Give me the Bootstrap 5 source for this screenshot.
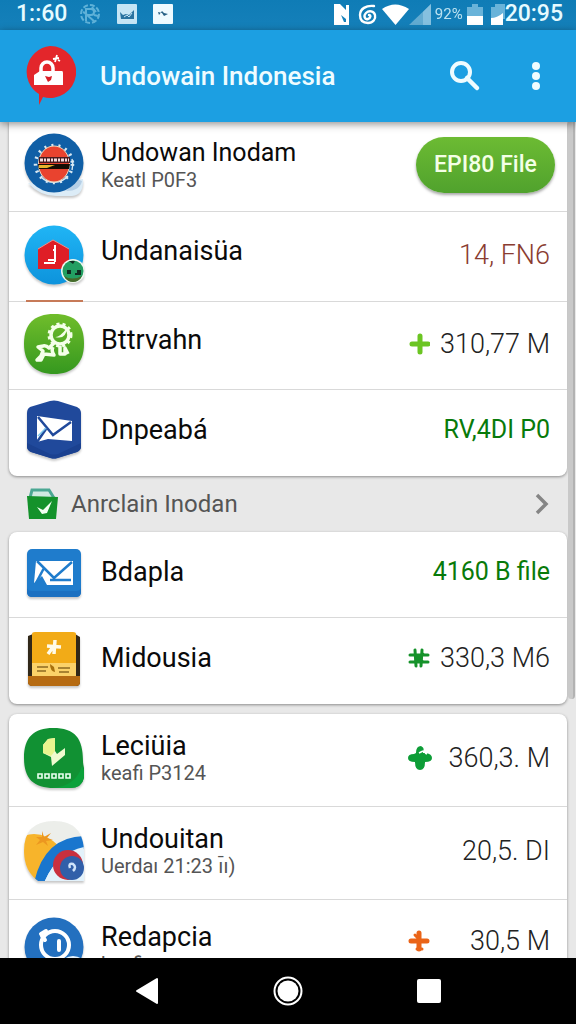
<!DOCTYPE html>
<html lang="id">
<head>
<meta charset="utf-8">
<meta name="viewport" content="width=device-width, initial-scale=1">
<title>Undowain Indonesia</title>
<link href="https://cdn.jsdelivr.net/npm/bootstrap@5.3.0/dist/css/bootstrap.min.css" rel="stylesheet">
<style>
  body { font-family: Roboto, "Liberation Sans", sans-serif; background: #e8e8e8; color: #0a0a0a; }
  .status-bar { background: linear-gradient(#0f7cb6, #1580ba); min-height: 30px; color: #e6fbff; font-size: 23px; font-weight: 500; line-height: 28px; padding: 0 13px 2px 16px; }
  .status-bar .percent { font-size: 15px; font-weight: 400; opacity: .8; }
  .app-bar { background: #1c9fe2; min-height: 92px; padding: 0 20px 0 24px; box-shadow: 0 2px 8px rgba(0,0,0,.45); z-index: 2; }
  .app-bar h1 { font-size: 26px; font-weight: 500; line-height: 32px; color: #effcff; }
  .app-bar .actions { gap: 43px; }
  .icon-btn { background: none; border: 0; padding: 0; line-height: 0; }
  .screen { padding: 0 9px; min-height: 0; }
  .panel { background: #fff; border-radius: 8px; box-shadow: 0 1px 3px rgba(0,0,0,.4); }
  .panel-first { border-radius: 0 0 8px 8px; }
  .panel-next { margin-top: 10px; }
  .entry { min-height: 90px; padding: 0 17px 4px 15px; gap: 17px; border-bottom: 1px solid #d9d9d9; }
  .entry:last-child { border-bottom: 0; }
  .entry-md { min-height: 88px; }
  .entry-sm { min-height: 86px; padding-bottom: 6px; }
  .entry-lg { min-height: 93px; }
  .entry-end { padding: 4px 17px 0 15px; }
  .entry-action { padding-right: 12px; }
  .entry svg.app { width: 60px; height: 64px; flex: none; filter: drop-shadow(0 2px 1px rgba(0,0,0,.22)); }
  .entry h2 { font-size: 27px; font-weight: 400; line-height: 30px; margin: 0; }
  .entry h2.raised { padding-bottom: 8px; }
  .entry-action h2 { font-size: 25px; }
  .entry p { font-size: 20px; line-height: 24px; margin: 0; color: #555; }
  .metric { min-width: 142px; }
  .amount { font-size: 27px; font-weight: 300; line-height: 30px; color: #222; }
  .amount-green { color: #087a0a; font-size: 25px; font-weight: 400; }
  .amount-red { color: #8a3c31; }
  .btn-file { background: linear-gradient(#6cbb33, #50a22d); color: #f4ffe6; font-size: 23px; font-weight: 500; line-height: 32px; padding: 12px 16px; border: 0; border-radius: 28px; min-width: 139px; box-shadow: 0 2px 3px rgba(0,0,0,.35); }
  .section-link { min-height: 56px; padding: 0 17px; gap: 12px; font-size: 24px; line-height: 30px; color: #555; text-decoration: none; }
  .strip { position: absolute; left: 17px; bottom: -1px; width: 57px; height: 2px; background: #c77a58; }
  .scroll-thumb { position: absolute; right: 1px; top: 0; width: 7px; height: 69%; background: #c9c9c9; border-right: 2px solid #b2b2b2; border-radius: 0 0 4px 4px; }
  .nav-keys { min-height: 66px; background: #000; padding: 0 134px; z-index: 2; }
</style>
</head>
<body class="vh-100 d-flex flex-column overflow-hidden">

<div class="status-bar d-flex align-items-center justify-content-between">
  <div class="d-flex align-items-center">
    <span class="me-2">1::60</span>
    <svg class="ms-1" width="22" height="22" viewBox="0 0 22 22" fill="none" stroke="#5eb1d8" stroke-width="2"><circle cx="11" cy="11" r="9" stroke-dasharray="5 2"/><path d="M7 18V6h5a3 3 0 0 1 0 6H8l8 7M4 9l4 2M13 4l4 5M15 12l4 1"/></svg>
    <svg class="ms-3" width="20" height="20" viewBox="0 0 20 20"><rect width="20" height="20" rx="1" fill="#c5e5f5"/><path d="M3 8l3 3 3-1 3 1 5-5v9H4z" fill="#2872a0"/><path d="M7 13l3-2 2 2 3-4" stroke="#c5e5f5" fill="none"/></svg>
    <svg class="ms-3" width="20" height="20" viewBox="0 0 20 20"><rect width="20" height="20" rx="1" fill="#eefaff"/><path d="M5 8l4 1 2 3 4-2-4-1-2-2-3 4z" fill="#255f85"/></svg>
  </div>
  <div class="d-flex align-items-center">
    <svg width="16" height="21" viewBox="0 0 16 21"><path d="M0 0h6l6 6V1h3v20H0z" fill="#fff"/><path d="M7 11l5 4v3h-2z" fill="#1580ba"/></svg>
    <svg class="ms-2" width="20" height="21" viewBox="0 0 20 21" fill="none" stroke="#fff" stroke-width="2.400" stroke-linecap="round"><path d="M16 2C8 1 2 5 2 11c0 5 3 8 8 8s8-4 7-8-6-5-9-2-1 7 2 6 3-4 1-4"/></svg>
    <svg class="ms-1" width="27" height="21" viewBox="0 0 27 21"><path d="M0 5Q13-4 27 5L13.500 21z" fill="#fff"/></svg>
    <svg width="22" height="21" viewBox="0 0 22 21"><path d="M0 21L22 0v21z" fill="#62abd1"/><path d="M14 8l8-8v21h-8z" fill="#85c0df"/></svg>
    <span class="percent ms-1">92%</span>
    <svg class="ms-1" width="16" height="21" viewBox="0 0 16 21"><path d="M0 3h5V0h6v3h5v9H0z" fill="#69b3d9"/><path d="M0 12h16v9H0z" fill="#fff"/></svg>
    <svg class="ms-2" width="14" height="21" viewBox="0 0 14 21"><path d="M0 3h4V0h10v15H0z" fill="#69b3d9"/><path d="M0 14q6 0 12-5v12H0z" fill="#fff"/></svg>
    <span>20:95</span>
  </div>
</div>

<header class="app-bar d-flex align-items-center position-relative">
  <svg width="52" height="60" viewBox="0 0 52 60"><path d="M26 0a26 26 0 1 1-7 51L15 59V48A26 26 0 0 1 26 0z" fill="#e3262b"/><path d="M10 29l6-4h22q1 0 1 2v12H10z" fill="#fff"/><path d="M17 26v-4a6 6 0 0 1 12 0v4" fill="none" stroke="#fff" stroke-width="3.500"/><path d="M21 30l4 1 3-1-1 4-3 2z" fill="#d81c24"/><path d="M33 9l-2 7M29 13l6-1M34 14l2 1" stroke="#fff" stroke-width="1.800"/></svg>
  <h1 class="mb-0 ms-4 flex-grow-1">Undowain Indonesia</h1>
  <div class="actions d-flex">
    <button class="icon-btn" aria-label="Cari"><svg width="32" height="32" viewBox="0 0 32 32" fill="none" stroke="#effcff"><circle cx="12" cy="12" r="9" stroke-width="4"/><path d="M18 18l10 10" stroke-width="4.500" stroke-linecap="round"/></svg></button>
    <button class="icon-btn" aria-label="Menu"><svg width="32" height="32" viewBox="0 0 32 32" fill="#effcff"><circle cx="12" cy="6" r="4"/><circle cx="12" cy="16" r="4"/><circle cx="12" cy="26" r="4"/></svg></button>
  </div>
</header>

<main class="screen flex-grow-1 overflow-hidden position-relative">
  <div class="panel panel-first">
    <div class="entry entry-action d-flex align-items-center">
      <svg class="app" viewBox="0 0 60 64"><path d="M4 50Q16 63 32 63H48Q60 62 59 46z" fill="#dcecf7"/><path d="M42 58Q56 58 58 48L53 46z" fill="#b5cfe6"/><circle cx="30" cy="30" r="29.500" fill="#105fa6"/><circle cx="30" cy="31" r="18.500" fill="none" stroke="#d8e9f3" stroke-width="3.500" stroke-dasharray="2 5"/><path d="M17 44a18.500 18.500 0 0 0 27-1M48 26a19 19 0 0 1 0 11" fill="none" stroke="#d8e9f3" stroke-width="1.500"/><ellipse cx="30" cy="31" rx="15.500" ry="18" fill="#e9432f" stroke="#eed7bb"/><path d="M15 24h31v6H15z" fill="#4a1c20"/><path d="M16 27h29" stroke="#f5dfe0" stroke-width="3" stroke-dasharray="3 1 2 1"/><path d="M14 31h32l-1 5H15z" fill="#160d04"/><path d="M15 32h16l-8 3h-8z" fill="#e7b32d"/></svg>
      <div class="flex-grow-1"><h2>Undowan Inodam</h2><p>Keatl P0F3</p></div>
      <button class="btn btn-file">EPI80 File</button>
    </div>
    <div class="entry d-flex align-items-center position-relative">
      <svg class="app" viewBox="0 0 60 64"><defs><linearGradient id="sky" x2="0" y2="1"><stop stop-color="#20b5f5"/><stop offset="1" stop-color="#0d93dc"/></linearGradient></defs><circle cx="30" cy="32" r="29.500" fill="url(#sky)"/><path d="M14 26l15-9 16 9v20H14z" fill="#df1e26"/><path d="M14 26l15-9 16 9" fill="none" stroke="#ef8d88"/><path d="M31 22v17M29 27h3M20 40h11M24 37h7" fill="none" stroke="#fff" stroke-width="2"/><circle cx="49" cy="48" r="12" fill="#eef7ef"/><circle cx="49" cy="48" r="10.500" fill="#239f62"/><path d="M40 53q8 5 18 0-3 6-9 6t-9-6z" fill="#456a2a"/><path d="M45 38l6 0-2 3zM43 47h4v4h-4zM53 47h4v5h-6v-2h2z" fill="#102d22"/></svg>
      <h2 class="raised flex-grow-1">Undanaisüa</h2>
      <span class="amount amount-red">14, FN6</span>
      <span class="strip"></span>
    </div>
    <div class="entry entry-md d-flex align-items-center">
      <svg class="app" viewBox="0 0 60 64"><defs><linearGradient id="leaf" x2="0" y2="1"><stop stop-color="#70bd2b"/><stop offset="1" stop-color="#35981f"/></linearGradient></defs><path d="M30 2C52 2 60 12 60 32S48 62 30 62 0 52 0 32 10 2 30 2z" fill="url(#leaf)"/><circle cx="36" cy="23" r="9" fill="none" stroke="#f4ffe9" stroke-width="3.500"/><circle cx="36" cy="23" r="11" fill="none" stroke="#f4ffe9" stroke-width="3" stroke-dasharray="3 3"/><path d="M31 25q4 1 12-9-1 12-12 9z" fill="#f4ffe9"/><path d="M30 31l-5 5q-3-3-6-2l-5 1 5 4-2 5-4 4 4 0 3-6 10 1q-3-4-1-8M36 34v8l5 0v-6l3 6" fill="none" stroke="#f4ffe9" stroke-width="3.500" stroke-linejoin="round"/></svg>
      <h2 class="raised flex-grow-1">Bttrvahn</h2>
      <div class="metric d-flex align-items-center justify-content-between">
        <svg width="22" height="22" viewBox="0 0 22 22"><path d="M12 3v16M4 11h16" stroke="#6bc522" stroke-width="5" stroke-linecap="round"/></svg>
        <span class="amount">310,77 M</span>
      </div>
    </div>
    <div class="entry entry-sm d-flex align-items-center">
      <svg class="app" viewBox="0 0 60 64"><path d="M6 9L26 3q4-1 8 0l19 6q4 2 4 6v33q0 4-4 6L34 60q-4 1-8 0L7 54q-4-2-4-6V15q0-4 3-6z" fill="#20499b"/><path d="M3 45v4q0 3 4 5l20 6q3 1 6 0l20-6q4-2 4-5v-4L34 56q-4 1-8 0z" fill="#1b4190"/><path d="M13 18l35 5v20l-24-2-11 3z" fill="#fff"/><path d="M14 19l15 18 18-13M13 44l9-13" fill="none" stroke="#20499b" stroke-width="2.500"/><path d="M14 38l8-8" stroke="#78c6ee" stroke-width="1.500"/></svg>
      <h2 class="flex-grow-1">Dnpeabá</h2>
      <span class="amount amount-green">RV,4DI P0</span>
    </div>
  </div>

  <a href="#" class="section-link d-flex align-items-center">
    <svg width="33" height="32" viewBox="0 0 33 32"><path d="M4 10l2-8h17l5 8" fill="#cfe9e0" stroke="#4ba793" stroke-width="3"/><path d="M1 8l31 1-2 22H3z" fill="#14922b"/><path d="M11 19l6 3 9-9-5 12-5 1z" fill="#f3fff3"/></svg>
    <span class="flex-grow-1">Anrclain Inodan</span>
    <svg width="16" height="24" viewBox="0 0 16 24" fill="none" stroke="#858585" stroke-width="3.500"><path d="M3 3l9 9-9 9"/></svg>
  </a>

  <div class="panel">
    <div class="entry entry-sm d-flex align-items-center">
      <svg class="app" viewBox="0 0 60 64"><rect x="3" y="9" width="54" height="48" rx="5" fill="#1f7ccc"/><path d="M3 47v5q0 5 5 5h44q5 0 5-5v-5q0 4-5 4H8q-5 0-5-4z" fill="#1b70c1"/><path d="M12 21h37v24H23l-5-9-8 7z" fill="#fff"/><path d="M13 21l17 17 18-16M12 43l8-15M26 40h21" fill="none" stroke="#1f7ccc" stroke-width="2.500"/></svg>
      <h2 class="flex-grow-1">Bdapla</h2>
      <span class="amount amount-green">4160 B file</span>
    </div>
    <div class="entry entry-sm d-flex align-items-center">
      <svg class="app" viewBox="0 0 60 64"><path d="M4 10l5-2h42l5 3v45q0 3-3 4H8q-4-1-4-4z" fill="#302718"/><path d="M8 8q0-2 3-2h38q3 0 3 2v43H8z" fill="#f2ab17"/><path d="M8 37h44v13H8z" fill="#fbd269"/><path d="M4 50h52v6q0 4-4 4H8q-4 0-4-4z" fill="#b66b12"/><path d="M31 14l-1 14M23 20l14 1M29 21l-5 7" stroke="#fffbe9" stroke-width="3.500"/><path d="M13 41h11M13 45h9M34 42h12M35 46h10" stroke="#8d6a20" stroke-width="1.500"/><path d="M26 38q0 7 5 8l-1-5z" fill="#a8700d"/></svg>
      <h2 class="flex-grow-1">Midousia</h2>
      <div class="metric d-flex align-items-center justify-content-between">
        <svg width="22" height="22" viewBox="0 0 22 22" fill="none" stroke="#15922a" stroke-width="3" stroke-linecap="round"><path d="M7 3l1 16M14 3l-1 16M2 8h18M2 15h18M7 7l8 8M15 7l-8 8"/></svg>
        <span class="amount">330,3 M6</span>
      </div>
    </div>
  </div>

  <div class="panel panel-next">
    <div class="entry entry-lg d-flex align-items-center">
      <svg class="app" viewBox="0 0 60 64"><path d="M29 2C51 2 59 12 59 35q0 3 1 7v10q-2 10-14 10H30C10 62 0 53 0 32S10 2 29 2z" fill="#119133"/><path d="M58 40q2 3 2 8 0 14-15 14H28Q52 60 58 40z" fill="#0ba13b"/><path d="M24 13l7-1v13l2 3 8-6v7L28 40l-1-9-8-4v-8z" fill="#effbd0"/><path d="M24 13l7-1v13l-4 5-8-3v-8z" fill="#e9f58f"/><path d="M14 48h4v4h-4zM21 48h4v4h-4zM28 48h4v4h-4zM35 48h4v4h-4zM42 48h4v4h-4z" fill="none" stroke="#e9fff0" stroke-width="1.600"/></svg>
      <div class="flex-grow-1"><h2>Leciüia</h2><p>keafi P3124</p></div>
      <div class="metric d-flex align-items-center justify-content-between">
        <svg width="24" height="24" viewBox="0 0 24 24"><path d="M8 7q0-7 5-7 4 2 2 5v2h3q6 1 6 5t-7 4q0 8-5 8t-5-8q-7 0-7-4t6-4z" fill="#0d9d37"/><path d="M11 7l4-2M17 7l2 1" stroke="#fff" stroke-width="1.500"/></svg>
        <span class="amount">360,3. M</span>
      </div>
    </div>
    <div class="entry entry-lg d-flex align-items-center">
      <svg class="app" viewBox="0 0 60 64"><defs><clipPath id="blob"><path d="M30 2C50 2 60 13 60 34V62H14Q0 52 0 32 0 2 30 2z"/></clipPath></defs><g clip-path="url(#blob)"><path d="M0 0h60v64H0z" fill="#eceeea"/><path d="M0 17Q18 10 36 28L12 62H0z" fill="#f7b42b"/><path d="M10 64Q20 18 60 17v13Q34 31 20 64z" fill="#1976ce"/><path d="M20 64Q32 34 60 28v36z" fill="#e3f2fb"/></g><path d="M18 12l2 6 7-4-4 5 6 2-7 1 2 5-5-4-7 3 4-5-4-3 6 0z" fill="#ec9720"/><circle cx="44" cy="46" r="15" fill="#c9303f"/><circle cx="48" cy="49" r="12" fill="#315fa9"/><path d="M46 49q-2-5 3-4 4 3 0 7" fill="none" stroke="#cfe3fa" stroke-width="2.500"/></svg>
      <div class="flex-grow-1"><h2>Undouitan</h2><p>Uerdaı 21:23 ı̄ı)</p></div>
      <span class="amount">20,5. DI</span>
    </div>
    <div class="entry entry-lg entry-end d-flex align-items-center">
      <svg class="app" viewBox="0 0 60 64"><circle cx="30" cy="30" r="29.500" fill="#2370bf"/><circle cx="31" cy="28" r="14" fill="none" stroke="#fff" stroke-width="4"/><path d="M17 17l5-3M18 19l3 4M35 24v9" stroke="#fff" stroke-width="4" stroke-linecap="round"/><ellipse cx="49" cy="48" rx="11" ry="8" fill="#a8b596" stroke="#e8f3fb" stroke-width="2"/></svg>
      <div class="flex-grow-1"><h2>Redapcia</h2><p>keafi</p></div>
      <div class="metric d-flex align-items-start justify-content-between pb-3">
        <svg class="mt-1" width="22" height="22" viewBox="0 0 22 22"><path d="M11 3v16M3 11h16" stroke="#ea6418" stroke-width="5" stroke-linecap="round"/><path d="M7 5l3 3M9 19h5" stroke="#ea6418" stroke-width="3" stroke-linecap="round"/></svg>
        <span class="amount">30,5 M</span>
      </div>
    </div>
  </div>
  <div class="scroll-thumb"></div>
</main>

<nav class="nav-keys d-flex align-items-center justify-content-between position-relative">
  <button class="icon-btn" aria-label="Kembali"><svg width="26" height="28" viewBox="0 0 26 28"><path d="M3 14L23 2v24z" fill="#fff" stroke="#fff" stroke-width="2" stroke-linejoin="round"/></svg></button>
  <button class="icon-btn" aria-label="Beranda"><svg width="30" height="30" viewBox="0 0 30 30"><circle cx="15" cy="15" r="13.500" fill="none" stroke="#fff" stroke-width="2"/><circle cx="15" cy="15" r="10.500" fill="#fff"/></svg></button>
  <button class="icon-btn" aria-label="Terbaru"><svg width="26" height="26" viewBox="0 0 26 26"><rect x="1" y="1" width="24" height="24" rx="2" fill="#fff"/></svg></button>
</nav>
<script src="https://cdn.jsdelivr.net/npm/bootstrap@5.3.0/dist/js/bootstrap.bundle.min.js"></script>
</body>
</html>
